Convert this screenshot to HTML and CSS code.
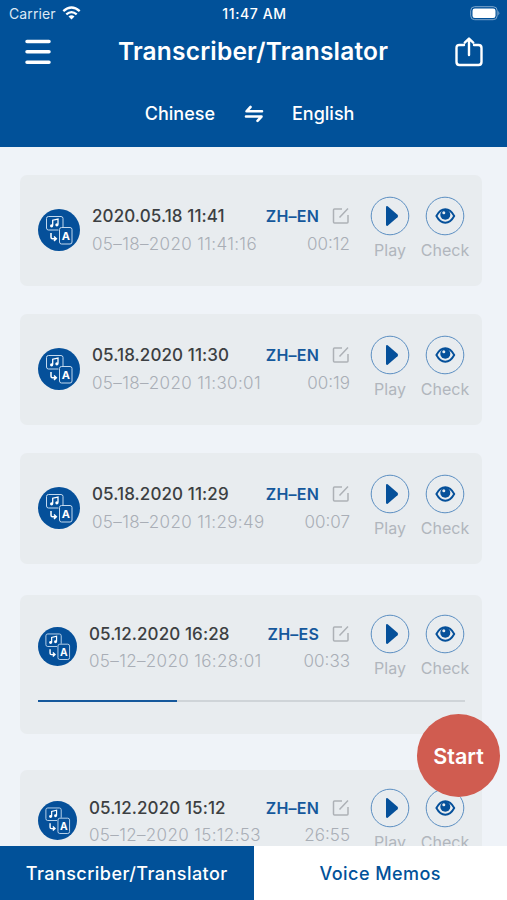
FILE: index.html
```html
<!DOCTYPE html>
<html lang="en">
<head>
    <meta charset="UTF-8">
    <meta name="viewport" content="width=device-width, initial-scale=1.0">
    <title>Transcriber/Translator</title>
    <link rel="stylesheet" href="styles.css">
</head>
<body>
    <!-- Shared icons -->
    <svg class="sprite" width="0" height="0">
        <symbol id="icon-badge" viewBox="0 0 42 42">
            <circle cx="21" cy="21" r="21" fill="#05509a"/>
            <g fill="none" stroke="#c3d9ee" stroke-width="1">
                <path d="M20.500 21H10.500a2 2 0 0 1-2-2V9.500a2 2 0 0 1 2-2h12.500a2 2 0 0 1 2 2V18"/>
                <rect x="21.500" y="18.500" width="12.500" height="16.500" rx="2"/>
            </g>
            <path d="M14.700 16.500v-5.300l5.300-1.200v5.500" fill="none" stroke="#fff" stroke-width="1.300"/>
            <circle cx="13.600" cy="16.800" r="1.600" fill="#fff"/>
            <circle cx="18.900" cy="15.800" r="1.600" fill="#fff"/>
            <path d="M13 24v4.200q0 1.500 1.500 1.500h3M16 27.500l2.300 2.200-2.300 2.200" fill="none" stroke="#fff" stroke-width="1.500"/>
            <text class="badge-letter" x="27.800" y="30.800" text-anchor="middle">A</text>
        </symbol>
        <symbol id="icon-edit" viewBox="0 0 18 18">
            <path d="M10 2H2.500Q1.500 2 1.500 3v12q0 1 1 1h12.500q1 0 1-1V8M7.500 10.500l8.500-9" fill="none" stroke="#adb1b6" stroke-width="1.500"/>
        </symbol>
        <symbol id="icon-play" viewBox="0 0 40 40">
            <circle cx="20" cy="20" r="18.800" fill="none" stroke="#5c8fc2" stroke-width="1"/>
            <path d="M16 11.500q0-2 1.700-1.300l9.800 8.600q1.300 1.200 0 2.400l-9.800 8.600q-1.700.7-1.700-1.300z" fill="#05509a"/>
        </symbol>
        <symbol id="icon-eye" viewBox="0 0 40 40">
            <circle cx="20" cy="20" r="18.800" fill="none" stroke="#5c8fc2" stroke-width="1"/>
            <path d="M11.400 20Q15 13.300 20.300 13.300T29.200 20Q25.600 26.700 20.300 26.700T11.400 20z" fill="none" stroke="#05509a" stroke-width="1.900"/>
            <circle cx="20.300" cy="18.700" r="5" fill="#05509a"/>
            <circle cx="18.800" cy="16.800" r="1.500" fill="#e8ecef"/>
        </symbol>
    </svg>

    <div class="app">
        <header class="header">
            <div class="status-bar">
                <div class="carrier">
                    <span>Carrier</span>
                    <svg width="19" height="14" viewBox="0 0 19 14" fill="none" stroke="#fff" stroke-width="2.300">
                        <path d="M1.300 5.200Q9.500-2.300 17.700 5.200M4.300 8.400q5.200-4.600 10.400 0"/>
                        <path d="M6.500 10.600q3-2.500 6 0l-3 3z" fill="#fff" stroke="none"/>
                    </svg>
                </div>
                <span class="time">11:47 AM</span>
                <svg class="battery" width="30" height="15" viewBox="0 0 30 15">
                    <rect x=".7" y=".7" width="26.500" height="13" rx="4" fill="none" stroke="#7fa7cc" stroke-width="1"/>
                    <rect x="2.500" y="2.500" width="23" height="9.500" rx="2.300" fill="#fff"/>
                    <path d="M28.300 5q2 2.200 0 4.400z" fill="#7fa7cc"/>
                </svg>
            </div>
            <div class="title-bar">
                <svg width="26" height="26" viewBox="0 0 26 26" stroke="#fff" stroke-width="3.500" stroke-linecap="round">
                    <path d="M2 2.500h22M2 12.800h22M2 23.200h22"/>
                </svg>
                <h1>Transcriber/Translator</h1>
                <svg width="28" height="30" viewBox="0 0 28 30" fill="none" stroke="#fff" stroke-width="2.400" stroke-linecap="round" stroke-linejoin="round">
                    <path d="M9 8H4.500Q1.500 8 1.500 11v14q0 3 3 3h19q3 0 3-3V11q0-3-3-3H19M14 18V2M9.800 5.600 14 1.500l4.200 4.100"/>
                </svg>
            </div>
            <div class="languages">
                <span class="source">Chinese</span>
                <svg width="20" height="20" viewBox="0 0 20 20" fill="none" stroke="#fff" stroke-width="2.600" stroke-linecap="round" stroke-linejoin="round">
                    <path d="M18 7.300H2.500L6.500 3M2 12.500h15.500L13.500 16.800"/>
                </svg>
                <span class="target">English</span>
            </div>
        </header>

        <main class="list">
            <div class="card">
                <svg class="badge"><use href="#icon-badge"/></svg>
                <div class="details">
                    <div class="row">
                        <span class="name">2020.05.18 11:41</span>
                        <span class="lang">ZH–EN</span>
                        <svg class="edit"><use href="#icon-edit"/></svg>
                    </div>
                    <div class="row">
                        <span class="date">05–18–2020 11:41:16</span>
                        <span class="duration">00:12</span>
                    </div>
                </div>
                <div class="actions">
                    <div class="action"><svg><use href="#icon-play"/></svg><span>Play</span></div>
                    <div class="action"><svg><use href="#icon-eye"/></svg><span>Check</span></div>
                </div>
            </div>

            <div class="card">
                <svg class="badge"><use href="#icon-badge"/></svg>
                <div class="details">
                    <div class="row">
                        <span class="name">05.18.2020 11:30</span>
                        <span class="lang">ZH–EN</span>
                        <svg class="edit"><use href="#icon-edit"/></svg>
                    </div>
                    <div class="row">
                        <span class="date">05–18–2020 11:30:01</span>
                        <span class="duration">00:19</span>
                    </div>
                </div>
                <div class="actions">
                    <div class="action"><svg><use href="#icon-play"/></svg><span>Play</span></div>
                    <div class="action"><svg><use href="#icon-eye"/></svg><span>Check</span></div>
                </div>
            </div>

            <div class="card">
                <svg class="badge"><use href="#icon-badge"/></svg>
                <div class="details">
                    <div class="row">
                        <span class="name">05.18.2020 11:29</span>
                        <span class="lang">ZH–EN</span>
                        <svg class="edit"><use href="#icon-edit"/></svg>
                    </div>
                    <div class="row">
                        <span class="date">05–18–2020 11:29:49</span>
                        <span class="duration">00:07</span>
                    </div>
                </div>
                <div class="actions">
                    <div class="action"><svg><use href="#icon-play"/></svg><span>Play</span></div>
                    <div class="action"><svg><use href="#icon-eye"/></svg><span>Check</span></div>
                </div>
            </div>

            <div class="card card-tall">
                <svg class="badge"><use href="#icon-badge"/></svg>
                <div class="details">
                    <div class="row">
                        <span class="name">05.12.2020 16:28</span>
                        <span class="lang">ZH–ES</span>
                        <svg class="edit"><use href="#icon-edit"/></svg>
                    </div>
                    <div class="row">
                        <span class="date">05–12–2020 16:28:01</span>
                        <span class="duration">00:33</span>
                    </div>
                </div>
                <div class="actions">
                    <div class="action"><svg><use href="#icon-play"/></svg><span>Play</span></div>
                    <div class="action"><svg><use href="#icon-eye"/></svg><span>Check</span></div>
                </div>
                <div class="progress"><div class="progress-fill" style="width: 32.6%"></div></div>
            </div>

            <div class="card card-tall card-last">
                <svg class="badge"><use href="#icon-badge"/></svg>
                <div class="details">
                    <div class="row">
                        <span class="name">05.12.2020 15:12</span>
                        <span class="lang">ZH–EN</span>
                        <svg class="edit"><use href="#icon-edit"/></svg>
                    </div>
                    <div class="row">
                        <span class="date">05–12–2020 15:12:53</span>
                        <span class="duration">26:55</span>
                    </div>
                </div>
                <div class="actions">
                    <div class="action"><svg><use href="#icon-play"/></svg><span>Play</span></div>
                    <div class="action"><svg><use href="#icon-eye"/></svg><span>Check</span></div>
                </div>
            </div>
        </main>

        <nav class="tabs">
            <a class="tab active">Transcriber/Translator</a>
            <a class="tab">Voice Memos</a>
        </nav>

        <button class="start-btn">Start</button>
    </div>
</body>
</html>
```

FILE: styles.css
```css
* {
    box-sizing: border-box;
}

body {
    margin: 0;
    font-family: Inter, "Liberation Sans", sans-serif;
    background-color: #eff3f8;
}

svg {
    display: block;
    flex-shrink: 0;
}

.sprite {
    display: none;
}

.badge-letter {
    font-size: 11px;
    font-weight: 700;
    fill: #fff;
}

.app {
    position: relative;
    display: flex;
    flex-direction: column;
    width: 507px;
    height: 900px;
    overflow: hidden;
}

/* Header */
.header {
    height: 147px;
    flex-shrink: 0;
    background-color: #015199;
    color: #fff;
}

.status-bar {
    display: grid;
    grid-template-columns: 1fr auto 1fr;
    align-items: center;
    height: 26px;
    padding: 0 7px 0 9px;
    font-size: 14px;
}

.carrier {
    display: flex;
    align-items: center;
    gap: 6px;
    color: #dce8f4;
    letter-spacing: 0.1px;
}

.time {
    font-size: 14px;
    font-weight: 500;
    letter-spacing: 0.6px;
}

.battery {
    justify-self: end;
}

.title-bar {
    display: flex;
    align-items: center;
    justify-content: space-between;
    height: 51px;
    padding: 0 24px 0 25px;
}

h1 {
    margin: 0 0 2px;
    font-size: 24.5px;
    font-weight: 600;
    letter-spacing: 0.2px;
}

.languages {
    display: grid;
    grid-template-columns: 215px 20px auto;
    column-gap: 28.5px;
    align-items: center;
    height: 73px;
    font-size: 18px;
    font-weight: 500;
}

.source {
    text-align: right;
}

/* Recordings */
.list {
    display: flex;
    flex-direction: column;
    flex: 1;
    gap: 28px;
    min-height: 0;
    padding: 28px 25px 0 20px;
    overflow: hidden;
}

.card {
    display: flex;
    flex-wrap: wrap;
    align-items: flex-start;
    align-content: flex-start;
    flex-shrink: 0;
    height: 111px;
    padding: 21px 14px 0 18px;
    border-radius: 7px;
    background-color: #e8ecef;
}

.badge {
    width: 42px;
    height: 42px;
    margin-top: 13px;
}

.details {
    width: 258px;
    margin: 6px 17px 0 12px;
}

.row {
    display: flex;
    align-items: center;
    height: 28px;
    white-space: nowrap;
}

.name {
    color: #3c3f42;
    font-size: 17px;
    font-weight: 500;
    letter-spacing: 0.1px;
}

.lang {
    margin-left: auto;
    color: #15589c;
    font-size: 16px;
    font-weight: 600;
    letter-spacing: 0.2px;
}

.edit {
    width: 18px;
    height: 18px;
    margin-left: 13px;
}

.date,
.duration {
    color: #a9aeb6;
    font-size: 17px;
    font-weight: 300;
}

.date {
    letter-spacing: 0.35px;
}

.duration {
    margin-left: auto;
}

.actions {
    display: flex;
    gap: 9px;
}

.action {
    display: flex;
    flex-direction: column;
    align-items: center;
    width: 46px;
    color: #b1b6bd;
    font-size: 16px;
    line-height: 28px;
}

.action svg {
    width: 40px;
    height: 40px;
}

.card-tall {
    height: 139px;
    margin-top: 3px;
    padding-top: 19px;
}

.card-tall .badge {
    width: 39px;
    height: 39px;
}

.card-tall .row {
    height: 27px;
}

.card-tall .details {
    width: 261px;
}

.card-last {
    margin-top: 8px;
    padding-top: 18px;
}

.progress {
    width: 427px;
    height: 2px;
    margin-top: 18px;
    background-color: #cfd4d8;
}

.progress-fill {
    height: 100%;
    background-color: #15589c;
}

/* Bottom tabs */
.tabs {
    display: flex;
    flex-shrink: 0;
    height: 54px;
}

.tab {
    display: flex;
    flex: 1;
    align-items: center;
    justify-content: center;
    background-color: #fff;
    color: #015199;
    font-size: 18px;
    font-weight: 500;
    letter-spacing: 0.45px;
}

.tab.active {
    background-color: #015199;
    color: #fff;
}

.start-btn {
    position: absolute;
    right: 7px;
    bottom: 103px;
    width: 83px;
    height: 83px;
    padding: 0;
    border: none;
    border-radius: 50%;
    background-color: #d05c50;
    color: #fff;
    font-family: inherit;
    font-size: 21.5px;
    font-weight: 600;
}
```
